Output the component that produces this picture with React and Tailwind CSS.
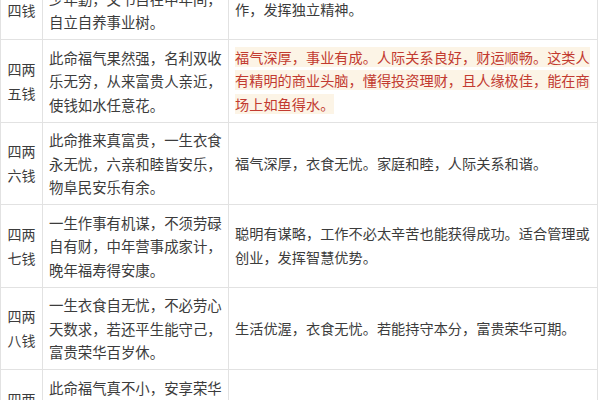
import React from 'react';

const rows = [
    {
        weight: ['四两', '四钱'],
        verse: ['平生衣禄是绵长，件件心中', '少年勤，文书自在中年间，', '自立自养事业树。'],
        note: ['一生勤劳，中年后生活安稳自在。适合从事文书相关工', '作，发挥独立精神。'],
    },
    {
        weight: ['四两', '五钱'],
        verse: ['此命福气果然强，名利双收', '乐无穷，从来富贵人亲近，', '使钱如水任意花。'],
        note: ['福气深厚，事业有成。人际关系良好，财运顺畅。这类人', '有精明的商业头脑，懂得投资理财，且人缘极佳，能在商', '场上如鱼得水。'],
        highlight: true,
    },
    {
        weight: ['四两', '六钱'],
        verse: ['此命推来真富贵，一生衣食', '永无忧，六亲和睦皆安乐，', '物阜民安乐有余。'],
        note: ['福气深厚，衣食无忧。家庭和睦，人际关系和谐。'],
    },
    {
        weight: ['四两', '七钱'],
        verse: ['一生作事有机谋，不须劳碌', '自有财，中年营事成家计，', '晚年福寿得安康。'],
        note: ['聪明有谋略，工作不必太辛苦也能获得成功。适合管理或', '创业，发挥智慧优势。'],
    },
    {
        weight: ['四两', '八钱'],
        verse: ['一生衣食自无忧，不必劳心', '天数求，若还平生能守己，', '富贵荣华百岁休。'],
        note: ['生活优渥，衣食无忧。若能持守本分，富贵荣华可期。'],
    },
    {
        weight: ['四两', '九钱'],
        verse: ['此命福气真不小，安享荣华', '福禄全，家业兴隆人丁旺，', '一世清闲乐自然。'],
        note: ['福气不小，一生安享荣华。家业兴旺，晚年清闲自在。'],
    },
];

export default function App() {
    return (
        <div
            className="w-[600px] h-[400px] overflow-hidden bg-white text-[#3c3c3c]"
            style={{ fontFamily: '"Noto Sans CJK SC", "Noto Sans", sans-serif' }}
        >
            <div className="mt-[-42.5px] w-[598px] border-l border-r border-[#e2e2e2]">
                {rows.map((row, i) => (
                    <div key={i} className="flex h-[82.5px] border-b border-[#e2e2e2]">
                        {/* weight */}
                        <div className="w-[42px] shrink-0 flex flex-col items-center justify-center border-r border-[#e2e2e2] text-[14px] leading-[24px]">
                            {row.weight.map((w) => (
                                <span key={w}>{w}</span>
                            ))}
                        </div>
                        {/* verse */}
                        <div className="w-[186px] shrink-0 flex flex-col justify-center pl-[6px] border-r border-[#e2e2e2] text-[14.4px] leading-[23.5px] whitespace-nowrap">
                            {row.verse.map((line) => (
                                <span key={line}>{line}</span>
                            ))}
                        </div>
                        {/* note */}
                        <div className="flex-1 flex flex-col justify-center pl-[6px] text-[14.2px] leading-[23.5px] whitespace-nowrap">
                            {row.note.map((line) => (
                                <span key={line}>
                                    {row.highlight ? (
                                        <span className="bg-[#fcf4e6] text-[#c23a30]">{line}</span>
                                    ) : (
                                        line
                                    )}
                                </span>
                            ))}
                        </div>
                    </div>
                ))}
            </div>
        </div>
    );
}
